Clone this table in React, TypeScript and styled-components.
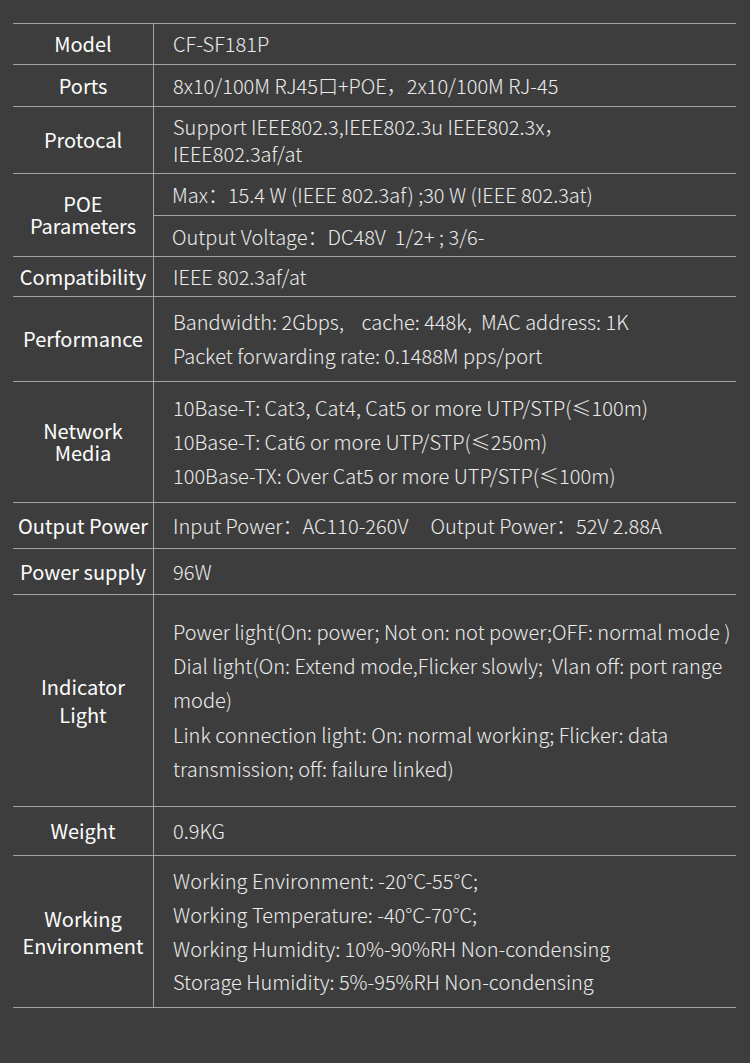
import React from "react";
import styled, { createGlobalStyle } from "styled-components";

const Global = createGlobalStyle`
  html, body { margin: 0; padding: 0; background: #3d3d3d; }
  body { font-family: "Noto Sans CJK SC", "Noto Sans", sans-serif; }
  * { box-sizing: border-box; }
`;

const Page = styled.div`
  width: 750px;
  height: 1063px;
  background: #3d3d3d;
  padding: 23px 14px 0 13px;
`;

const Table = styled.div`
  border-top: 1px solid #a3a3a3;
  display: flex;
  flex-direction: column;
`;

const Row = styled.div<{ $h: number }>`
  display: grid;
  grid-template-columns: 141px 1fr;
  height: ${(p) => p.$h}px;
  border-bottom: 1px solid #a3a3a3;
`;

const Label = styled.div<{ $lh: number }>`
  border-right: 1px solid #a3a3a3;
  display: flex;
  align-items: center;
  justify-content: center;
  text-align: center;
  color: #ffffff;
  font-size: 20px;
  font-weight: 400;
  line-height: ${(p) => p.$lh}px;
  white-space: nowrap;
`;

const valueFont = `"Noto Sans CJK SC Light", "Noto Sans CJK SC DemiLight", "Noto Sans CJK SC", sans-serif`;

const Value = styled.div<{ $lh: number }>`
  display: flex;
  flex-direction: column;
  justify-content: center;
  padding-left: 19px;
  color: #ececec;
  font-family: ${valueFont};
  font-size: 20px;
  font-weight: 300;
  line-height: ${(p) => p.$lh}px;
  white-space: nowrap;
`;

const SplitValue = styled.div`
  display: grid;
  grid-template-rows: 42px 1fr;
`;

const SubValue = styled.div<{ $last?: boolean }>`
  display: flex;
  align-items: center;
  padding-left: 18px;
  color: #ececec;
  font-family: ${valueFont};
  font-size: 20px;
  font-weight: 300;
  white-space: nowrap;
  border-bottom: ${(p) => (p.$last ? "none" : "1px solid #a3a3a3")};
`;

type Spec = {
  label: string[];
  labelLh?: number;
  lines: string[];
  lh?: number;
  h: number;
};

const rows: Spec[] = [
  { label: ["Model"], lines: ["CF-SF181P"], h: 41 },
  { label: ["Ports"], lines: ["8x10/100M RJ45口+POE，2x10/100M RJ-45"], h: 42 },
  {
    label: ["Protocal"],
    lines: ["Support IEEE802.3,IEEE802.3u IEEE802.3x，", "IEEE802.3af/at"],
    lh: 27,
    h: 67,
  },
];

const rows2: Spec[] = [
  { label: ["Compatibility"], lines: ["IEEE 802.3af/at"], h: 40 },
  {
    label: ["Performance"],
    lines: [
      "Bandwidth: 2Gbps,\u00a0\u00a0\u00a0 cache: 448k,\u00a0 MAC address: 1K",
      "Packet forwarding rate: 0.1488M pps/port",
    ],
    lh: 34,
    h: 85,
  },
  {
    label: ["Network", "Media"],
    labelLh: 22,
    lines: [
      "10Base-T: Cat3, Cat4, Cat5 or more UTP/STP(≤100m)",
      "10Base-T: Cat6 or more UTP/STP(≤250m)",
      "100Base-TX: Over Cat5 or more UTP/STP(≤100m)",
    ],
    lh: 34,
    h: 121,
  },
  {
    label: ["Output Power"],
    lines: ["Input Power：AC110-260V\u00a0\u00a0\u00a0\u00a0 Output Power：52V 2.88A"],
    h: 46,
  },
  { label: ["Power supply"], lines: ["96W"], h: 46 },
  {
    label: ["Indicator", "Light"],
    labelLh: 28,
    lines: [
      "Power light(On: power; Not on: not power;OFF: normal mode )",
      "Dial light(On: Extend mode,Flicker slowly;\u00a0 Vlan off: port range",
      "mode)",
      "Link connection light: On: normal working; Flicker: data",
      "transmission; off: failure linked)",
    ],
    lh: 34.25,
    h: 212,
  },
  { label: ["Weight"], lines: ["0.9KG"], h: 49 },
  {
    label: ["Working", "Environment"],
    labelLh: 27,
    lines: [
      "Working Environment: -20°C-55°C;",
      "Working Temperature: -40°C-70°C;",
      "Working Humidity: 10%-90%RH Non-condensing",
      "Storage Humidity: 5%-95%RH Non-condensing",
    ],
    lh: 33.7,
    h: 152,
  },
];

const SpecRow = ({ s }: { s: Spec }) => (
  <Row $h={s.h}>
    <Label $lh={s.labelLh ?? 24}>
      <div>
        {s.label.map((l, i) => (
          <div key={i}>{l}</div>
        ))}
      </div>
    </Label>
    <Value $lh={s.lh ?? 26}>
      {s.lines.map((l, i) => (
        <div key={i}>{l}</div>
      ))}
    </Value>
  </Row>
);

export default function App() {
  return (
    <>
      <Global />
      <Page>
        <Table>
          {rows.map((s, i) => (
            <SpecRow key={i} s={s} />
          ))}
          <Row $h={83}>
            <Label $lh={22}>
              <div>
                <div>POE</div>
                <div>Parameters</div>
              </div>
            </Label>
            <SplitValue>
              <SubValue>Max：15.4 W (IEEE 802.3af) ;30 W (IEEE 802.3at)</SubValue>
              <SubValue $last>Output Voltage：DC48V&nbsp; 1/2+ ; 3/6-</SubValue>
            </SplitValue>
          </Row>
          {rows2.map((s, i) => (
            <SpecRow key={i} s={s} />
          ))}
        </Table>
      </Page>
    </>
  );
}
